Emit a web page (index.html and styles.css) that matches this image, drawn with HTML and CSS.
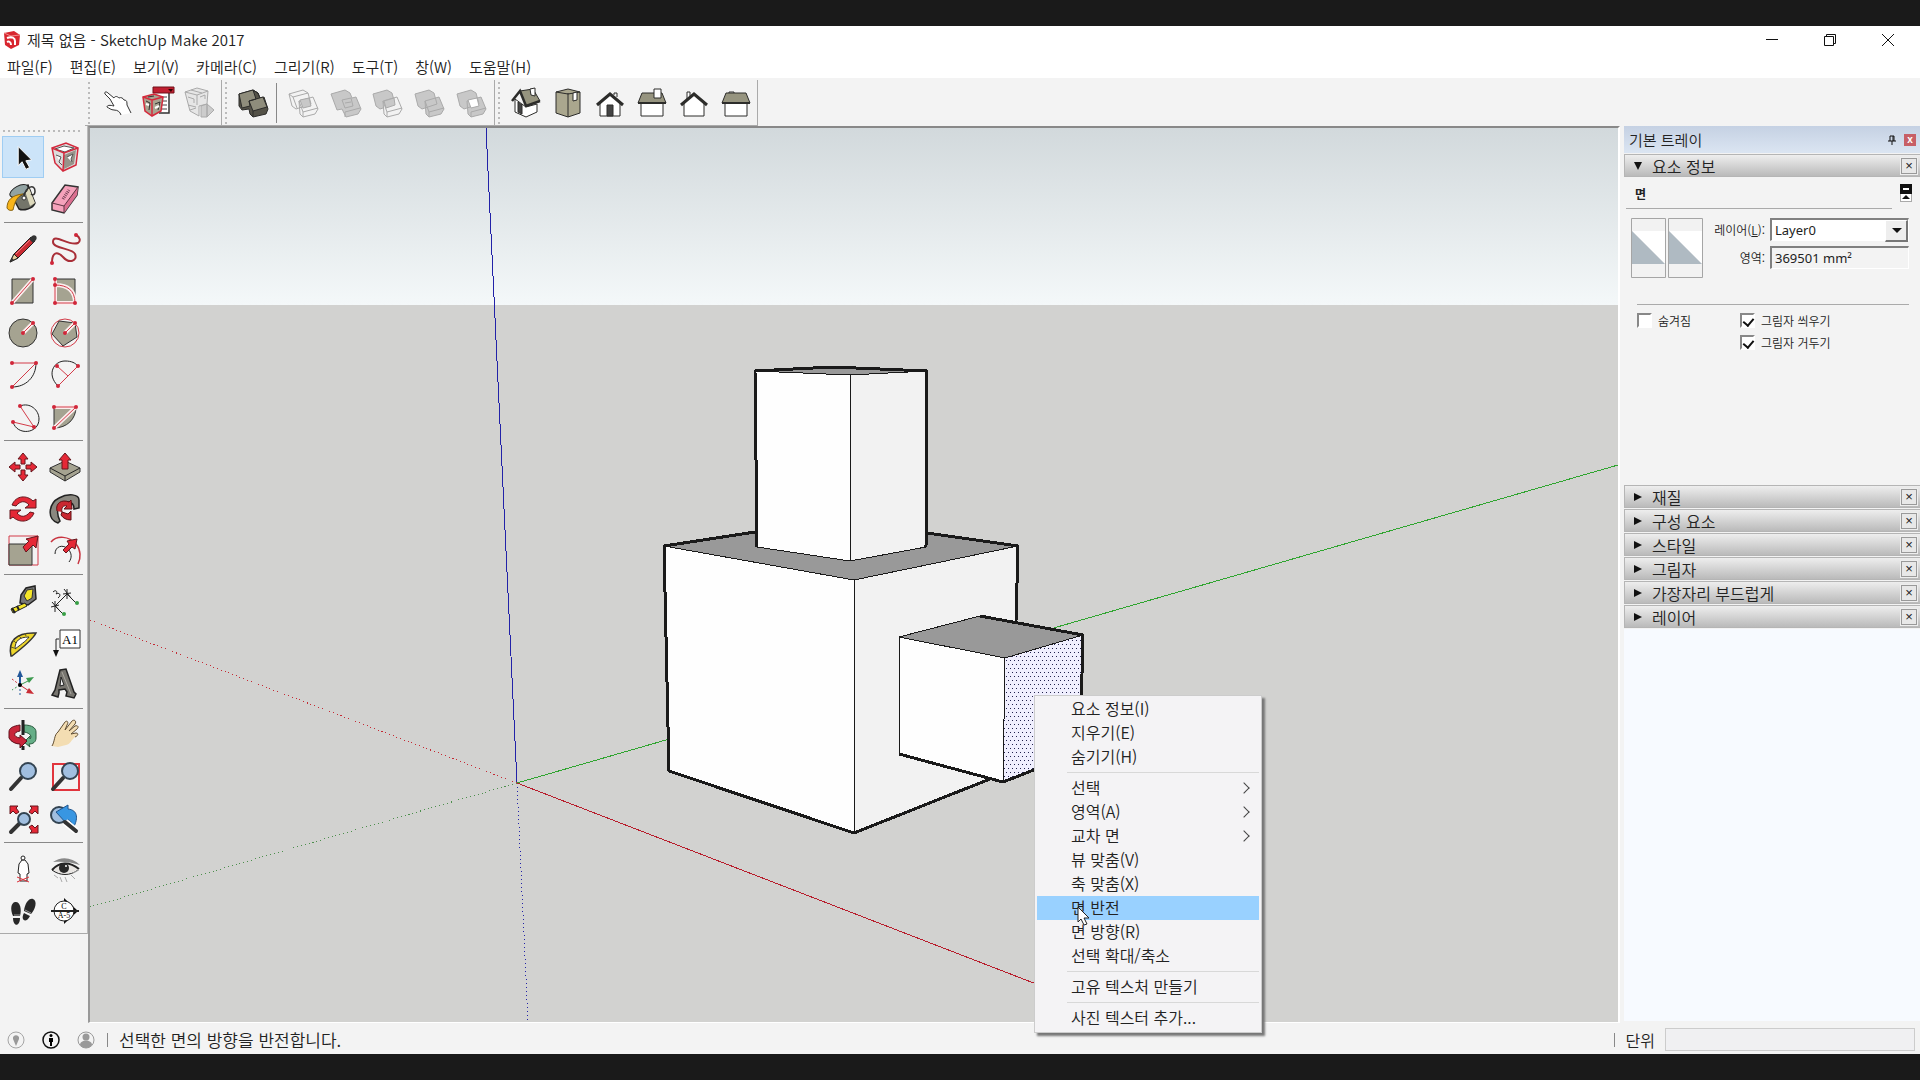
FILE: index.html
```
<!DOCTYPE html>
<html lang="ko">
<head>
    <meta charset="utf-8">
    <title>제목 없음 - SketchUp Make 2017</title>
    <link rel="stylesheet" href="styles.css">
</head>
<body>
<div class="window">
    <header class="titlebar">
        <svg class="app-icon" viewBox="0 0 18 20"><path d="M1 3L11 1l6 4-1 10-8 4-6-4z" fill="#d8262f"/><path d="M1 3l7 3 9-1M8 6v3" stroke="#f28a8a" fill="none"/><path d="M4 8c5-2 8 0 8 3v4M4 12c2-1 4 0 4 3" stroke="#fff" stroke-width="2" fill="none"/></svg>
        <h1>제목 없음 - SketchUp Make 2017</h1>
        <div class="controls">
            <button aria-label="최소화"><svg viewBox="0 0 14 14"><path d="M1 6.500h12"/></svg></button>
            <button aria-label="이전 크기로"><svg viewBox="0 0 14 14"><path d="M1.500 3.500h9v9h-9zM3.500 3.500v-2h9v9h-2"/></svg></button>
            <button aria-label="닫기"><svg viewBox="0 0 14 14"><path d="M1 1l12 12M13 1L1 13"/></svg></button>
        </div>
    </header>

    <nav class="menubar">
        <button>파일(F)</button>
        <button>편집(E)</button>
        <button>보기(V)</button>
        <button>카메라(C)</button>
        <button>그리기(R)</button>
        <button>도구(T)</button>
        <button>창(W)</button>
        <button>도움말(H)</button>
    </nav>

    <div class="toolbar">
        <div class="group">
            <button class="tool" aria-label="손"><svg viewBox="0 0 42 42"><path d="M26 33c-1-3-3-5-7-5-3 0-5-2-7-3 0-2 3-2 7-1l-4-7-5-5c-1-2 1-3 3-1l6 5c1-2 3-2 5 0 2-1 4 0 5 2 3 0 3 2 3 5l4 8" fill="#fff" stroke="#333"/></svg></button>
            <button class="tool" aria-label="3D Warehouse"><svg viewBox="0 0 42 42"><path d="M17 8h15v23H22" fill="#fff" stroke="#333" stroke-width="1.500"/><path d="M16 5h21v6H16z" fill="#c01f30" stroke="#701018"/><path d="M31 7h5l-2 3z" fill="#300"/><path d="M24 15h6M24 19h6M24 23h6M24 27h6" stroke="#444"/><path d="M6 15l11-3 9 3-2 14-9 5-7-5z" fill="#a9a390" stroke="#d52a3c" stroke-width="1.500"/><path d="M6 15l9 3v16M15 18l11-3" stroke="#d52a3c" fill="none" stroke-width="1.500"/><path d="M9 19l4 2-1 7M18 22l5-2-2 8M11 15l6-1" stroke="#333" fill="none"/><path d="M9 22l3 1M18 26l4-2" stroke="#fff" fill="none" stroke-width="2"/></svg></button>
            <button class="tool dim" aria-label="구성 요소 공유"><svg viewBox="0 0 42 42"><path d="M6 10l12-4 11 3-1 13-8 2v10l-9-5z" fill="#e6e6e6"/><path d="M6 10l12 3v10M18 13l11-4M9 15l6 2v4M21 15l5-2v4M9 23l8 2M12 8l11 3M11 28l6-2" fill="none"/><path d="M22 24l6-2v13h-6zM28 22l7 6-7 7z" fill="#ccc"/></svg></button>
        </div>
        <div class="group">
            <button class="tool" aria-label="외부 셸"><svg viewBox="0 0 42 42" class="shell"><path d="M7 12l14-4 5 3 2 5 4-1 4 12-2 5-13 3-3-3-1-5-7 1-3-4z" fill="#545248"/><path d="M7 12l14-4 3 9-7 2 1 5-8 2zM17 19l14-4 4 10-14 4z" fill="#8f8d7c"/><path d="M21 8l5 3 2 5M21 29v6" fill="none"/></svg></button>
            <span class="split"></span>
            <button class="tool dim" aria-label="교차"><svg viewBox="0 0 42 42"><path d="M7 12l14-4 5 3 3 11-15 5-4-3zM17 19l14-4 5 12-3 5-12 3-3-3z" fill="none"/><path d="M18 18l9-2 2 8-8 2z" fill="#c8c8c8"/><path d="M7 12l4 3 15-4M11 15l4 11M17 19l4 11 15-4M21 30v5" fill="none"/></svg></button>
            <button class="tool dim" aria-label="결합"><svg viewBox="0 0 42 42"><path d="M7 12l14-4 5 3 2 5 4-1 5 12-3 5-12 3-4-8-5 1z" fill="#c8c8c8"/><path d="M18 18l9-2 2 8-8 2zM21 21l6-1M21 30l15-4M21 30v5" fill="none"/></svg></button>
            <button class="tool dim" aria-label="빼기"><svg viewBox="0 0 42 42"><path d="M7 12l14-4 5 3 3 11-15 5-4-3z" fill="#c8c8c8"/><path d="M17 19l14-4 5 12-3 5-12 3-3-3z" fill="#f2f2f2"/><path d="M18 19l10-3 1 7-9 3z" fill="#c8c8c8"/><path d="M17 19l4 11 15-4M21 30v5" fill="none"/></svg></button>
            <button class="tool dim" aria-label="잘라내기"><svg viewBox="0 0 42 42"><path d="M7 12l14-4 5 3 3 11-15 5-4-3zM17 19l14-4 5 12-3 5-12 3-3-3z" fill="#c8c8c8"/><path d="M21 30l15-4M21 30v5M21 30l-4-11" fill="none"/></svg></button>
            <button class="tool dim" aria-label="분할"><svg viewBox="0 0 42 42"><path d="M7 12l14-4 5 3 3 11-15 5-4-3zM17 19l14-4 5 12-3 5-12 3-3-3z" fill="#c8c8c8"/><path d="M18 18l9-2 2 8-8 2z" fill="#fff"/><path d="M21 30l15-4M21 30v5" fill="none"/></svg></button>
        </div>
        <div class="group">
            <button class="tool house" aria-label="등각투영"><svg viewBox="0 0 42 42"><path d="M10 17l11 8 11-3v8l-11 5-11-5z" fill="#fff"/><path d="M15 9l13-2 7 12-14 5z" fill="#96947f"/><path d="M7 19l8-10 6 15 14-5" stroke-width="2.500" fill="none"/><path d="M25 7l5-1v8l-4-1z" fill="#fff"/><path d="M13 20l4 3v9l-4-2z" fill="#444"/></svg></button>
            <button class="tool house" aria-label="상단"><svg viewBox="0 0 42 42"><path d="M9 10l12-3 12 3v21l-12 4-12-4z" fill="#aaa78e"/><path d="M21 11v24M9 10l12 2 12-2" fill="none"/><path d="M26 11l4-1v8l-4 1z" fill="#fff"/></svg></button>
            <button class="tool house" aria-label="앞쪽"><svg viewBox="0 0 42 42"><path d="M25 13v-2h3v4" fill="none"/><path d="M11 21l10-9 10 9v13H11z" fill="#fff"/><path d="M8 23l13-11 13 11" stroke-width="3" fill="none"/><path d="M18 23h6v11h-6z" fill="#444"/></svg></button>
            <button class="tool house" aria-label="오른쪽"><svg viewBox="0 0 42 42"><path d="M10 20h22v14H10z" fill="#fff"/><path d="M11 11h20l4 10H7z" fill="#96947f"/><path d="M7 21h28" stroke-width="2"/><path d="M23 7h7v9h-7z" fill="#fff"/></svg></button>
            <button class="tool house" aria-label="뒤쪽"><svg viewBox="0 0 42 42"><path d="M14 17v-7h3v5" fill="#fff"/><path d="M11 21l10-9 10 9v13H11z" fill="#fff"/><path d="M8 23l13-11 13 11" stroke-width="3" fill="none"/></svg></button>
            <button class="tool house" aria-label="왼쪽"><svg viewBox="0 0 42 42"><path d="M14 11v-1h5v1" fill="#fff"/><path d="M10 20h22v14H10z" fill="#fff"/><path d="M11 11h20l4 10H7z" fill="#96947f"/><path d="M7 21h28" stroke-width="2"/></svg></button>
        </div>
    </div>

    <main class="workspace">
        <aside class="palette">
            <div class="grid">
                <button class="tool active" aria-label="선택"><svg viewBox="0 0 42 42"><path d="M16 10l14 14-6 1 4 7-4 2-4-8-4 4z" fill="#111" stroke="#fff"/></svg></button>
                <button class="tool" aria-label="구성 요소 만들기"><svg viewBox="0 0 42 42"><path d="M8 12l14-5 12 5-2 17-13 6-8-8z" fill="#ddd"/><path d="M20 19l12-5-2 14-10 5z" fill="#97948a"/><path d="M11 13l9-3 10 2-9 4zM12 19l5 2-2 5 3 3M23 21l6-3-2 5 1 3" fill="#fff" stroke="#555"/><path d="M8 12l14-5 12 5-2 17-13 6-8-8zM8 12l12 5 14-5M20 17l-1 18" stroke="#d3293c" stroke-width="1.500" fill="none"/></svg></button>
                <button class="tool" aria-label="페인트통"><svg viewBox="0 0 42 42"><path d="M9 16l17-9 7 18c-2 6-12 8-16 6z" fill="#74756a" stroke="#222" stroke-width="1.500"/><path d="M27 10l6 15-5 3-5-15z" fill="#ddd9bc"/><ellipse cx="17" cy="13" rx="10" ry="5" fill="#92a3a3" stroke="#222" transform="rotate(-28 17 13)"/><path d="M22 18c2-10 11-12 11-5 0 5-3 4-4 3" stroke="#333" fill="none" stroke-width="1.500"/><circle cx="22" cy="20" r="2" fill="#fff" stroke="#333"/><path d="M5 30c0-8 5-13 16-14-6 3-8 7-10 16-3 1-5 0-6-2z" fill="#f8b51b" stroke="#8a6410"/></svg></button>
                <button class="tool" aria-label="지우개"><svg viewBox="0 0 42 42"><path d="M8 25L21 7l13 2-1 8-13 18-12-3z" fill="#f5a2bb" stroke="#333" stroke-width="1.500"/><path d="M20 28L34 9l-1 8-13 18z" fill="#dc6f90"/><path d="M8 25l12 3L34 9M20 28v7" fill="none" stroke="#5d3442"/><path d="M19 21l6-9" stroke="#754357" stroke-width="3" stroke-dasharray="1 1"/></svg></button>
            </div>
            <hr>
            <div class="grid">
                <button class="tool" aria-label="선"><svg viewBox="0 0 42 42"><path d="M8 34l4-8L29 9l4 4-17 17z" fill="#c92b32" stroke="#222"/><path d="M8 34l4-8 4 4z" fill="#e9cf9d" stroke="#222"/><path d="M8 34l2-4 2 2zM27 11l3-3c3-2 6 1 4 4l-3 3z" fill="#333"/><path d="M14 26l14-14" stroke="#ec7880"/></svg></button>
                <button class="tool" aria-label="자유형"><svg viewBox="0 0 42 42"><path d="M8 35c0-11 5-12 11-6 6 7 15 4 12-3-2-6-22-5-22-12 0-10 16 5 25 1 3-2 2-6-2-8" fill="none" stroke="#a92e37" stroke-width="2"/><g class="dots"><circle cx="8" cy="35" r="2"/><circle cx="32" cy="7" r="2"/></g></svg></button>
                <button class="tool" aria-label="사각형"><svg viewBox="0 0 42 42"><path d="M10 9h21v24H10z" class="stone"/><path d="M10 33L31 9" class="halo"/><path d="M10 33L31 9" class="red"/><g class="dots"><circle cx="10" cy="33" r="2"/><circle cx="31" cy="9" r="2"/></g></svg></button>
                <button class="tool" aria-label="회전된 사각형"><svg viewBox="0 0 42 42"><path d="M11 9h20v24H11z" class="stone"/><path d="M11 9v24h20c0-13-8-18-20-18" class="halo"/><path d="M11 9v24h20c0-13-8-18-20-18" class="red"/><g class="dots"><circle cx="11" cy="9" r="2"/><circle cx="11" cy="15" r="2"/><circle cx="11" cy="33" r="2"/><circle cx="31" cy="33" r="2"/></g></svg></button>
                <button class="tool" aria-label="원"><svg viewBox="0 0 42 42"><circle cx="21" cy="21" r="14" class="stone"/><path d="M21 21l10-10" class="halo"/><path d="M21 21l10-10" class="red"/><g class="dots"><circle cx="21" cy="21" r="2"/><circle cx="31" cy="11" r="2"/></g></svg></button>
                <button class="tool" aria-label="다각형"><svg viewBox="0 0 42 42"><circle cx="21" cy="21" r="14" class="red"/><path d="M31 11l2 14-14 9-11-12 7-13z" class="stone"/><path d="M21 21l10-10" class="halo"/><path d="M21 21l10-10" class="red"/><g class="dots"><circle cx="21" cy="21" r="2"/><circle cx="31" cy="11" r="2"/></g></svg></button>
                <button class="tool" aria-label="호"><svg viewBox="0 0 42 42"><path d="M34 9c0 14-10 24-24 24" class="ink"/><path d="M10 9h24L10 33" class="red"/><g class="dots"><circle cx="10" cy="9" r="2"/><circle cx="34" cy="9" r="2"/><circle cx="10" cy="33" r="2"/></g></svg></button>
                <button class="tool" aria-label="2점 호"><svg viewBox="0 0 42 42"><path d="M14 32C2 20 10 7 21 7c7 0 10 2 13 5" class="ink"/><path d="M34 12L14 32M13 12l11 10" class="red"/><g class="dots"><circle cx="14" cy="32" r="2"/><circle cx="34" cy="12" r="2"/><circle cx="13" cy="12" r="2"/></g></svg></button>
                <button class="tool" aria-label="3점 호"><svg viewBox="0 0 42 42"><path d="M18 10c10-4 19 4 19 13 0 15-22 17-26 3" class="ink"/><path d="M18 10l14 21-21-5" class="red"/><g class="dots"><circle cx="18" cy="10" r="2"/><circle cx="32" cy="31" r="2"/><circle cx="11" cy="26" r="2"/></g></svg></button>
                <button class="tool" aria-label="파이"><svg viewBox="0 0 42 42"><path d="M10 11h22c0 12-9 21-22 21z" class="stone"/><path d="M10 11h22L10 32" class="halo"/><path d="M10 11h22L10 32" class="red"/><g class="dots"><circle cx="10" cy="11" r="2"/><circle cx="32" cy="11" r="2"/><circle cx="10" cy="32" r="2"/></g></svg></button>
            </div>
            <hr>
            <div class="grid">
                <button class="tool" aria-label="이동"><svg viewBox="0 0 42 42"><path d="M21 7l5 6h-3v5h-4v-5h-3zM21 35l5-6h-3v-5h-4v5h-3zM7 21l6-5v3h5v4h-5v3zM35 21l-6-5v3h-5v4h5v3z" class="arrow"/></svg></button>
                <button class="tool" aria-label="밀기/끌기"><svg viewBox="0 0 42 42"><path d="M6 22l15-7 15 7v4l-15 9-15-9z" class="stone"/><path d="M6 22l15 8 15-8M21 30v5" class="ink"/><path d="M21 7l6 7h-3v9h-6v-9h-3z" class="arrow"/></svg></button>
                <button class="tool" aria-label="회전"><svg viewBox="0 0 42 42"><path d="M10 17c4-10 15-10 21-4l3-2v9H23l4-3c-4-5-9-4-13 1z" class="arrow"/><path d="M32 25c-4 10-15 10-21 4l-3 2v-9h11l-4 3c4 5 9 4 13-1z" class="arrow"/></svg></button>
                <button class="tool" aria-label="따라가기"><svg viewBox="0 0 42 42"><path d="M14 35C2 31 5 15 15 10c9-5 20-4 20 2v8l-5 1c0-9-10-9-15-2-3 5-1 10 1 14z" fill="#8a8880" stroke="#222" stroke-width="1.500"/><path d="M13 23c-2-8 5-12 12-9l2-2 1 9h-8l3-3c-4-1-6 2-5 6M18 24l6 2 3-3v9c-5 0-8-2-10-5z" fill="#c92830" stroke="#601015"/></svg></button>
                <button class="tool" aria-label="배율"><svg viewBox="0 0 42 42"><path d="M7 6h29v29H7z" class="red"/><path d="M7 14h23v21H7z" class="stone"/><path d="M21 17l6-6-3-2 12-3-2 12-3-3-7 7z" class="arrow"/></svg></button>
                <button class="tool" aria-label="오프셋"><svg viewBox="0 0 42 42"><path d="M7 12c6-7 18-6 25 2 5 6 5 14 2 20" fill="none" stroke="#c8333f" stroke-width="1.500"/><path d="M11 24c0-8 8-10 13-5 4 4 4 9 1 13" class="ink"/><path d="M19 20l6-6-2-3 10-2-2 10-3-2-6 6z" class="arrow"/></svg></button>
            </div>
            <hr>
            <div class="grid">
                <button class="tool" aria-label="줄자"><svg viewBox="0 0 42 42"><path d="M19 15l5-7 9-2 1 13-8 6-8-2z" fill="#777" stroke="#222" stroke-width="1.500"/><path d="M22 16l3-6 6-1-1 9-5 3z" fill="#f5e628" stroke="#333"/><path d="M9 29l14-6 2 3-14 7z" fill="#f5e628" stroke="#222"/><path d="M10 28l3 5M15 26l2 4" stroke="#222" stroke-width="2"/></svg></button>
                <button class="tool" aria-label="치수"><svg viewBox="0 0 42 42"><path d="M11 26l12-12M11 26l9 9M23 14l9 9M8 22l7 8M11 21v11M20 9l7 9M23 9v10M7 27l8-2M19 14l8-1" class="ink"/><path d="M9 12c3-3 5 0 3 2 3-2 6 1 2 4" class="ink"/><circle cx="20" cy="34" r="2" fill="#39a047"/><circle cx="33" cy="23" r="2" fill="#39a047"/></svg></button>
                <button class="tool" aria-label="각도기"><svg viewBox="0 0 42 42"><path d="M9 34c-3-14 4-24 25-23-2 4-6 9-24 23z" fill="#ecd52b" stroke="#333" stroke-width="1.500"/><path d="M13 27c0-8 4-12 14-12-2 3-6 6-14 12z" fill="#fff" stroke="#333"/><path d="M9 25l3 1M11 18l3 3M16 13l3 3M23 11l1 3" stroke="#665d20"/></svg></button>
                <button class="tool" aria-label="텍스트"><svg viewBox="0 0 42 42"><path d="M16 8h20v18H16z" fill="#fff" stroke="#333"/><text x="26" y="22" class="tag">A1</text><path d="M15 17h-3v13" class="ink"/><path d="M9 28h6l-3 7z" fill="#111"/></svg></button>
                <button class="tool" aria-label="축"><svg viewBox="0 0 42 42"><path d="M18 21V11" stroke="#23589a" stroke-width="2"/><path d="M18 6l3 7h-6z" fill="#23589a"/><path d="M18 21l8-4" stroke="#3b9a4e"/><path d="M32 13l-8 1 3 5z" fill="#3b9a4e"/><path d="M18 21l9 6" stroke="#c92d36"/><path d="M32 30l-8-1 3-5z" fill="#c92d36"/><path d="M18 21l-8-6" stroke="#c92d36" stroke-dasharray="2"/><path d="M18 21l-8 5" stroke="#3b9a4e" stroke-dasharray="2"/><path d="M18 21v11" stroke="#23589a" stroke-dasharray="2"/><circle cx="18" cy="21" r="2"/></svg></button>
                <button class="tool" aria-label="3D 텍스트"><svg viewBox="0 0 42 42"><path d="M16 6l6-1 8 23 2 2-2 4-8-2 1-4-2-3-6 1v3l-1 4-6-2 3-5z" fill="#77756f" stroke="#222" stroke-width="1.500"/><path d="M17 13l3 8-4 1z" fill="#eee" stroke="#222"/><path d="M18 8l9 22" fill="none" stroke="#aaa79f"/></svg></button>
            </div>
            <hr>
            <div class="grid">
                <button class="tool" aria-label="궤도"><svg viewBox="0 0 42 42"><path d="M22 11c8 0 12 3 12 7v6c0 4-3 6-7 6l1 3-6-5 6-6v3c2-2 1-6-6-7z" fill="#65ae87" stroke="#285a3c"/><path d="M18 11c-7 1-11 3-11 7v6c2 4 7 6 11 6v4l7-7-7-6v3c-7-1-7-6 0-7z" fill="#c8263a" stroke="#5e101b"/><path d="M21 6v15M21 32v4" stroke="#222" stroke-width="3"/></svg></button>
                <button class="tool" aria-label="이동 보기"><svg viewBox="0 0 42 42"><path d="M8 32c3-5 2-11 6-14L21 8c2-2 4 0 2 3l-2 5 7-9c2-2 5 0 3 3l-6 7 6-5c3-1 4 1 2 3l-6 5 5-1c3 0 2 3-1 4-4 3-4 7-9 8l-8 2z" fill="#f3ddb2"/><path d="M8 32c3-5 2-11 6-14L21 8c2-2 4 0 2 3l-2 5 7-9c2-2 5 0 3 3l-6 7 6-5c3-1 4 1 2 3l-6 5 5-1c3 0 2 3-1 4" fill="none" stroke="#614e33"/></svg></button>
                <button class="tool" aria-label="확대/축소"><svg viewBox="0 0 42 42"><path d="M19 22L9 33" class="handle"/><circle cx="26" cy="15" r="8" class="lens"/></svg></button>
                <button class="tool" aria-label="확대/축소 창"><svg viewBox="0 0 42 42"><path d="M9 8h26v26H9z" fill="none" stroke="#e1353d" stroke-width="2"/><path d="M19 22L9 33" class="handle"/><circle cx="26" cy="15" r="8" class="lens"/></svg></button>
                <button class="tool" aria-label="범위 확대/축소"><svg viewBox="0 0 42 42"><path d="M18 25L9 34" class="handle"/><circle cx="22" cy="21" r="6" class="lens"/><path d="M8 8h8l-2 2 3 4-3 2-3-3-3 3zM36 8h-8l2 2-3 4 3 2 3-3 3 3zM36 35h-8l2-2-3-4 3-2 3 3 3-3z" class="arrow"/></svg></button>
                <button class="tool" aria-label="이전"><svg viewBox="0 0 42 42"><circle cx="15" cy="17" r="8" class="lens"/><path d="M12 14l12-7v4c10 1 11 10 4 21 0-8-1-10-5-10v4z" fill="#3896e2" stroke="#20558e"/><path d="M21 24l11 9" stroke="#fff" stroke-width="7"/><path d="M21 24l11 9" class="handle"/></svg></button>
            </div>
            <hr>
            <div class="grid">
                <button class="tool" aria-label="카메라 배치"><svg viewBox="0 0 42 42"><path d="M18 33v-7l-2-1 1-9 3-4h3l3 4 1 9-2 1v7z" fill="#fff" stroke="#222"/><circle cx="21" cy="10" r="2" fill="#fff" stroke="#222"/><path d="M15 29l12 5M15 34l12-5" stroke="#e0323c"/></svg></button>
                <button class="tool" aria-label="둘러보기"><svg viewBox="0 0 42 42"><path d="M8 22c5-8 16-9 26-1-8 6-17 6-26 1z" fill="#e8e5e2"/><path d="M9 14c8-6 19-5 27 3-8-3-19-4-27-3z" fill="#888"/><path d="M8 22c7-8 17-9 27-1" fill="none" stroke="#222" stroke-width="2"/><path d="M8 22c8 6 18 6 26 0" class="ink"/><circle cx="20" cy="20" r="5" fill="#282828"/><circle cx="22" cy="18" r="1" fill="#fff"/><path d="M10 27l4 3M16 29l2 5M21 29l2 5M27 27l4 4M29 25l6-3" stroke="#aaa"/></svg></button>
                <button class="tool" aria-label="걷기"><svg viewBox="0 0 42 42"><path d="M13 12c5-1 7 7 5 14h-7c-3-7-2-13 2-14zM11 28h7c0 9-7 9-7 0zM31 9c5 2 2 11-2 15l-7-3c1-8 5-13 9-12zM22 23l6 3c-4 8-10 4-6-3z" fill="#282828"/><path d="M12 25h6M23 20l6 3" stroke="#999"/></svg></button>
                <button class="tool" aria-label="단면 평면"><svg viewBox="0 0 42 42"><path d="M20 8l14 13-14 13z" fill="#111"/><circle cx="20" cy="21" r="10" fill="#fff" stroke="#222"/><path d="M7 21h28" stroke="#222" stroke-width="2"/><text x="20" y="19" class="mark">C</text><text x="20" y="28" class="mark">A-5</text></svg></button>
            </div>
        </aside>

        <section class="viewport">
            <svg class="scene" viewBox="90 128 1528 894" preserveAspectRatio="xMinYMin slice">
                <defs>
                    <linearGradient id="sky" x2="0" y2="1"><stop stop-color="#d2d9dc"/><stop offset="1" stop-color="#f4f8f9"/></linearGradient>
                    <pattern id="picked" width="4" height="8" patternUnits="userSpaceOnUse"><path d="M0 0h4v8H0z" fill="#f0effe"/><path d="M0 0h1v1H0zM2 4h1v1H2z" fill="#22224e"/></pattern>
                </defs>
                <path d="M90 128h1528v895H90z" fill="#d2d2d0"/>
                <path d="M90 128h1528v177H90z" fill="url(#sky)"/>
                <g class="axes">
                    <path d="M517 783L486 128" stroke="#2222a8"/>
                    <path d="M517 783l11 239" stroke="#2222a8" stroke-dasharray="1 3"/>
                    <path d="M517 783l1101-318" stroke="#2fa52f"/>
                    <path d="M517 783L90 907" stroke="#4d8f4d" stroke-dasharray="1 3"/>
                    <path d="M517 783l620 240" stroke="#b81d2c"/>
                    <path d="M517 783L90 620" stroke="#c42b35" stroke-dasharray="1 3"/>
                </g>
                <g class="solid">
                    <path d="M664 546l91-14 172 1 91 13-164 34z" fill="#999"/>
                    <path d="M664 546l190 34v253l-185-62z" fill="#fefefe"/>
                    <path d="M854 580l164-34-8 225-156 62z" fill="#f2f2f2"/>
                    <path d="M664 546l190 34 164-34M854 580v253" class="thin"/>
                    <path d="M755 532l-91 14 5 225 185 62 136-54M927 533l91 13-2 75" class="thick"/>
                    <path d="M755 371l77-4 95 4-77 4z" fill="#999"/>
                    <path d="M755 371l95 4v186l-93-14z" fill="#fefefe"/>
                    <path d="M850 375l77-4-1 176-76 14z" fill="#f2f2f2"/>
                    <path d="M755 371l95 4 77-4M850 375v186M757 547l93 14 76-14" class="thin"/>
                    <path d="M757 547l-2-176 77-4 95 4-1 176" class="thick"/>
                    <path d="M899 637l81-21 103 19-78 23z" fill="#999"/>
                    <path d="M899 637l106 21-2 124-104-28z" fill="#fefefe"/>
                    <path d="M1005 658l78-23-3 117-77 30z" fill="url(#picked)"/>
                    <path d="M980 616l-81 21v117M899 637l106 21 78-23M1005 658l-2 124" class="thin"/>
                    <path d="M980 616l103 19-3 117-77 30-104-28" class="thick"/>
                </g>
            </svg>

            <div class="context-menu" role="menu">
                <button role="menuitem">요소 정보(I)</button>
                <button role="menuitem">지우기(E)</button>
                <button role="menuitem">숨기기(H)</button>
                <hr>
                <button role="menuitem" class="sub">선택</button>
                <button role="menuitem" class="sub">영역(A)</button>
                <button role="menuitem" class="sub">교차 면</button>
                <button role="menuitem">뷰 맞춤(V)</button>
                <button role="menuitem">축 맞춤(X)</button>
                <button role="menuitem" class="hover">면 반전</button>
                <button role="menuitem">면 방향(R)</button>
                <button role="menuitem">선택 확대/축소</button>
                <hr>
                <button role="menuitem">고유 텍스처 만들기</button>
                <hr>
                <button role="menuitem">사진 텍스터 추가...</button>
                <svg class="pointer" viewBox="0 0 14 20"><path d="M1 1v15l3-3 3 6 3-1-3-6h5z" fill="#fff" stroke="#222"/></svg>
            </div>
        </section>

        <aside class="tray">
            <header class="tray-title">
                <h2>기본 트레이</h2>
                <button class="pin" aria-label="고정"><svg viewBox="0 0 8 10"><path d="M2 6V1h4v5M0 6h8M4 6v4M5 1v5" fill="none" stroke="#111"/></svg></button>
                <button class="close-tray" aria-label="닫기">x</button>
            </header>
            <section class="panel">
                <header class="panel-head open"><h3>요소 정보</h3><button class="close" aria-label="닫기">×</button></header>
                <div class="entity">
                    <div class="entity-name">
                        <strong>면</strong>
                        <button aria-label="세부 정보"><svg viewBox="0 0 12 18"><path d="M0 0h12v18H0z" fill="#aaa"/><path d="M0 0h12v10H0z" fill="#111"/><path d="M3 5h6" stroke="#fff" stroke-width="2"/><path d="M1 10h10v7H1z" fill="#fff"/><path d="M2 15l4-4 4 4z" fill="#111"/></svg></button>
                    </div>
                    <div class="entity-fields">
                        <div class="swatches">
                            <svg viewBox="0 0 35 60"><path d="M.500.500h34v59H.500z" fill="#f2f2f2" stroke="#a5a5a5"/><path d="M1 13l33 33V13z" fill="#fff"/><path d="M1 13l33 33H1z" fill="#afbac2"/></svg>
                            <svg viewBox="0 0 35 60"><path d="M.500.500h34v59H.500z" fill="#f2f2f2" stroke="#a5a5a5"/><path d="M1 13l33 33V13z" fill="#fff"/><path d="M1 13l33 33H1z" fill="#afbac2"/></svg>
                        </div>
                        <div class="fields">
                            <label for="layer">레이어(<u>L</u>):</label>
                            <div class="combo"><select id="layer"><option>Layer0</option></select></div>
                            <label for="area">영역:</label>
                            <input id="area" type="text" value="369501 mm²" readonly>
                        </div>
                    </div>
                    <div class="checks">
                        <label><input type="checkbox">숨겨짐</label>
                        <div>
                            <label><input type="checkbox" checked>그림자 씌우기</label>
                            <label><input type="checkbox" checked>그림자 거두기</label>
                        </div>
                    </div>
                </div>
            </section>
            <section class="panel"><header class="panel-head"><h3>재질</h3><button class="close" aria-label="닫기">×</button></header></section>
            <section class="panel"><header class="panel-head"><h3>구성 요소</h3><button class="close" aria-label="닫기">×</button></header></section>
            <section class="panel"><header class="panel-head"><h3>스타일</h3><button class="close" aria-label="닫기">×</button></header></section>
            <section class="panel"><header class="panel-head"><h3>그림자</h3><button class="close" aria-label="닫기">×</button></header></section>
            <section class="panel"><header class="panel-head"><h3>가장자리 부드럽게</h3><button class="close" aria-label="닫기">×</button></header></section>
            <section class="panel"><header class="panel-head"><h3>레이어</h3><button class="close" aria-label="닫기">×</button></header></section>
            <div class="tray-rest"></div>
        </aside>
    </main>

    <footer class="statusbar">
        <button aria-label="위치"><svg viewBox="0 0 18 18"><circle cx="9" cy="9" r="8" fill="none" stroke="#a5a5a5"/><path d="M9 15L6 8c-1-5 7-5 6 0z" fill="#999"/></svg></button>
        <button aria-label="작성자"><svg viewBox="0 0 18 18"><circle cx="9" cy="9" r="8" fill="none" stroke="#111" stroke-width="1.500"/><circle cx="9" cy="4.500" r="1.500"/><path d="M7 7h4v4h-1v4H8v-4H7z"/></svg></button>
        <button aria-label="로그인"><svg viewBox="0 0 18 18"><circle cx="9" cy="9" r="8" fill="none" stroke="#999"/><circle cx="9" cy="6" r="3.500" fill="#999"/><path d="M3 14c0-6 12-6 12 0-3 4-9 4-12 0z" fill="#999"/></svg></button>
        <span class="line"></span>
        <p>선택한 면의 방향을 반전합니다.</p>
        <span class="line"></span>
        <label for="units">단위</label>
        <input id="units" type="text">
    </footer>
</div>
</body>
</html>
```
FILE: styles.css
```
* {
    box-sizing: border-box;
}
body {
    margin: 0;
    height: 100vh;
    padding: 26px 0;
    overflow: hidden;
    background: #1a1a1a;
    color: #222;
    font-family: "Noto Sans CJK KR", sans-serif;
    font-size: 16px;
    font-weight: 350;
}
h1, h2, h3, p {
    margin: 0;
    font-weight: inherit;
}
button {
    padding: 0;
    border: 0;
    background: none;
    color: inherit;
    font: inherit;
}
svg {
    display: block;
}
.window {
    display: flex;
    flex-direction: column;
    height: 100%;
    background: #f3f3f3;
}

/* title and menus */
.titlebar {
    display: flex;
    align-items: center;
    height: 28px;
    padding: 0 3px;
    background: #fff;
}
.app-icon {
    width: 18px;
    height: 20px;
    margin-right: 6px;
}
.titlebar h1 {
    flex: 1;
    font-size: 15px;
    line-height: 28px;
}
.controls {
    display: flex;
}
.controls button {
    width: 58px;
    height: 28px;
}
.controls svg {
    width: 14px;
    height: 14px;
    margin: auto;
    fill: none;
    stroke: #111;
}
.menubar {
    display: flex;
    gap: 1px;
    height: 24px;
    padding-top: 1px;
    background: #fff;
}
.menubar button {
    padding: 0 8px;
    font-size: 15px;
    line-height: 23px;
}
.menubar button:first-child {
    padding-left: 7px;
}

/* tool buttons */
.toolbar {
    display: flex;
    height: 48px;
    padding: 2px 0 0 85px;
}
.group {
    display: flex;
    align-items: center;
    padding-left: 3px;
    border-right: 1px solid #aaa;
    border-bottom: 1px solid #aaa;
}
.group:nth-child(2) {
    padding-right: 2px;
}
.group::before {
    content: "";
    width: 2px;
    height: 42px;
    margin-right: 5px;
    background: repeating-linear-gradient(#bbb 0 2px, transparent 2px 5px);
}
.split {
    width: 1px;
    height: 40px;
    margin: 0 5px 0 2px;
    background: #888;
}
.tool {
    width: 42px;
    height: 42px;
}
.tool svg {
    width: 42px;
    height: 42px;
}
.tool.active {
    background: #cce4f9;
    border: 1px solid #9fcdf3;
}
.tool.active svg {
    width: 40px;
    height: 40px;
}
.dim path {
    stroke: #aaa;
}
.shell path, .house path {
    stroke: #2c2c2a;
}
.stone {
    fill: #a5a391;
    stroke: #333;
    stroke-width: 1;
}
.ink {
    fill: none;
    stroke: #222;
}
.red {
    fill: none;
    stroke: #d33b48;
}
.halo {
    fill: none;
    stroke: #fbeeee;
    stroke-width: 4;
}
.dots {
    fill: #d02639;
}
.arrow {
    fill: #e52836;
    stroke: #64161c;
}
.handle {
    stroke: #333;
    stroke-width: 4;
    stroke-linecap: round;
}
.lens {
    fill: #a1bfe0;
    stroke: #334452;
    stroke-width: 2;
}
.tag {
    font: 13px "Liberation Serif", serif;
    text-anchor: middle;
}
.mark {
    font: 8px "Liberation Serif", serif;
    text-anchor: middle;
}

/* workspace */
.workspace {
    display: flex;
    flex: 1;
    min-height: 0;
}
.palette {
    flex: none;
    align-self: flex-start;
    width: 88px;
    padding: 10px 2px 1px;
    border-right: 1px solid #bbb;
    border-bottom: 1px solid #aaa;
    background: repeating-linear-gradient(90deg, #bbb 0 2px, transparent 2px 5px) 3px 4px / 77px 2px no-repeat;
}
.palette .grid {
    display: grid;
    grid-template-columns: 42px 42px;
}
.palette hr {
    height: 1px;
    margin: 2px 2px 5px;
    border: 0;
    background: #888;
}
.viewport {
    position: relative;
    flex: 1;
    min-width: 0;
    border: 2px solid #999;
    border-top-color: #888;
    border-right-color: #fff;
    border-bottom: 1px solid #fff;
}
.scene {
    width: 100%;
    height: 100%;
    shape-rendering: crispEdges;
}
.axes, .thin {
    fill: none;
    stroke-width: 1;
}
.thin {
    stroke: #1a1a1a;
}
.thick {
    fill: none;
    stroke: #1a1a1a;
    stroke-width: 3;
    stroke-linejoin: round;
}

/* context menu */
.context-menu {
    position: absolute;
    left: 944px;
    top: 567px;
    width: 228px;
    padding: 1px 2px 2px;
    border: 1px solid #ccc;
    background: #f4f3f5;
    box-shadow: 3px 3px 2px #777;
}
.context-menu button {
    display: block;
    width: 100%;
    height: 24px;
    padding: 0 0 2px 34px;
    font-size: 16px;
    line-height: 22px;
    text-align: left;
}
.context-menu hr {
    height: 1px;
    margin: 3px 0 3px 30px;
    border: 0;
    background: #d8d8d8;
}
.context-menu .hover {
    background: #99d1ff;
}
.context-menu .sub::after {
    content: "";
    float: right;
    width: 7px;
    height: 7px;
    margin: 8px 11px 0;
    border: solid #444;
    border-width: 1px 1px 0 0;
    transform: rotate(45deg);
}
.pointer {
    position: absolute;
    left: 42px;
    top: 210px;
    width: 14px;
    height: 20px;
}

/* tray */
.tray {
    display: flex;
    flex-direction: column;
    flex: none;
    width: 300px;
    padding-left: 4px;
}
.tray-title {
    display: flex;
    align-items: center;
    height: 27px;
    padding: 0 4px 0 5px;
    margin-bottom: 1px;
    background: linear-gradient(#c5d1e3, #dbe5f2);
}
.tray-title h2 {
    flex: 1;
    font-size: 15px;
    line-height: 27px;
}
.pin svg {
    width: 8px;
    height: 10px;
}
.close-tray {
    width: 12px;
    height: 12px;
    margin-left: 8px;
    background: #c75f66;
    color: #fff;
    font: bold 10px/10px "Liberation Sans", sans-serif;
}
.panel-head {
    display: flex;
    align-items: center;
    height: 23px;
    margin-bottom: 1px;
    padding: 0 3px 0 9px;
    border: 1px solid #b5b5b5;
    border-right: 0;
    background: linear-gradient(#eee, #bababa);
}
.panel-head::before {
    content: "";
    margin-right: 10px;
    border: solid transparent;
    border-width: 4px 0 4px 8px;
    border-left-color: #111;
}
.panel-head.open::before {
    border-color: #111 transparent;
    border-width: 8px 4px 0;
}
.panel-head h3 {
    flex: 1;
    font-size: 16px;
    line-height: 20px;
}
.close {
    width: 16px;
    height: 16px;
    border: 1px solid #999;
    outline: 1px solid #eee;
    background: #e8e8e8;
    font: 13px/13px "Liberation Sans", sans-serif;
}
.entity {
    height: 307px;
    padding: 2px 11px 0 2px;
    font-size: 12px;
}
.entity-name {
    display: flex;
    align-items: center;
    justify-content: space-between;
    height: 29px;
    margin-right: 17px;
    padding: 0 0 2px 9px;
    border-bottom: 1px solid #aaa;
}
.entity-name button {
    margin-right: -20px;
}
.entity-name svg {
    width: 12px;
    height: 18px;
}
.entity-fields {
    display: flex;
    justify-content: space-between;
    gap: 6px;
    padding: 9px 0 26px 5px;
}
.swatches {
    display: flex;
    gap: 2px;
}
.swatches svg {
    width: 35px;
    height: 60px;
}
.fields {
    display: grid;
    grid-template-columns: 56px 1fr;
    grid-auto-rows: 23px;
    gap: 5px;
    flex: 1;
    line-height: 23px;
}
.fields label {
    text-align: right;
    white-space: nowrap;
}
.fields select, .fields input {
    width: 100%;
    height: 23px;
    margin: 0;
    padding: 0 3px;
    border: 1px solid #fff;
    border-top: 2px solid #808080;
    border-left: 2px solid #808080;
    border-radius: 0;
    background: #fff;
    color: #222;
    font: 13px "Noto Sans", sans-serif;
    appearance: none;
}
.fields input {
    background: #f3f3f3;
}
.combo {
    position: relative;
}
.combo::before {
    content: "";
    position: absolute;
    right: 1px;
    top: 2px;
    width: 20px;
    height: 19px;
    border: 1px solid #fff;
    border-right: 2px solid #777;
    border-bottom: 2px solid #777;
    background: #eee;
}
.combo::after {
    content: "";
    position: absolute;
    right: 7px;
    top: 10px;
    border: solid transparent;
    border-width: 5px 5px 0;
    border-top-color: #111;
}
.checks {
    display: flex;
    margin-left: 11px;
    padding-top: 4px;
    border-top: 1px solid #aaa;
}
.checks > label {
    width: 103px;
}
.checks label {
    display: flex;
    align-items: center;
    height: 22px;
}
.checks input {
    width: 15px;
    height: 15px;
    margin: 0 6px 0 0;
    border: 2px solid #fff;
    border-top-color: #888;
    border-left-color: #888;
    background: #fff;
    appearance: none;
}
.checks input:checked::before {
    content: "";
    display: block;
    width: 5px;
    height: 8px;
    margin: 1px 0 0 3px;
    border: solid #111;
    border-width: 0 2px 2px 0;
    transform: rotate(40deg);
}
.tray-rest {
    flex: 1;
    margin-bottom: 2px;
    background: #f7faff;
}

/* status bar */
.statusbar {
    display: flex;
    align-items: center;
    height: 31px;
    padding: 2px 5px 0 7px;
}
.statusbar button {
    margin-right: 17px;
}
.statusbar svg {
    width: 18px;
    height: 18px;
}
.statusbar p {
    flex: 1;
    font-size: 17px;
    line-height: 24px;
}
.statusbar .line {
    width: 1px;
    height: 14px;
    margin-right: 11px;
    background: #888;
}
.statusbar button + .line {
    margin-left: -5px;
}
.statusbar label {
    margin-right: 10px;
}
.statusbar input {
    width: 250px;
    height: 23px;
    border: 1px solid #ccc;
    background: #f0f0f2;
}
```
